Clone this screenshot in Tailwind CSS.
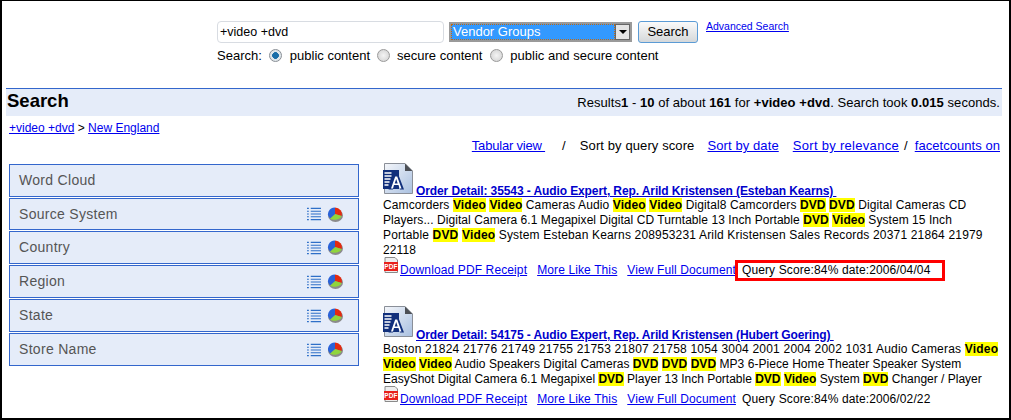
<!DOCTYPE html>
<html lang="en">
<head>
    <meta charset="UTF-8">
    <title>Search</title>
    <script src="https://cdn.jsdelivr.net/npm/@tailwindcss/browser@4"></script>
</head>
<body class="bg-white">
    <svg width="0" height="0" class="absolute">
        <defs>
            <linearGradient id="paper" x1="0" y1="0" x2="1" y2="1">
                <stop offset="0" stop-color="#f4f6fa"/>
                <stop offset="1" stop-color="#a9c0e0"/>
            </linearGradient>
            <symbol id="doc" viewBox="0 0 30 31">
                <path d="M1.500 .5H22L29.500 8V30.500H1.500Z" fill="url(#paper)" stroke="#8a8f98"/>
                <path d="M22 .5V8H29.500Z" fill="#4c4f55"/>
                <rect x="0" y="7" width="16" height="19" fill="#12307c"/>
                <path d="M1.500 10h7M1.500 13h7M1.500 16h6M1.500 19h5M1.500 22h4" stroke="#fff" stroke-width="1.300"/>
                <path d="M5.500 26.500L11 12h4.500l5.500 14.500h-4l-1-3h-5l-1 3Z" fill="#12307c"/>
                <path fill-rule="evenodd" d="M8 25.500L12.200 13.500h2L18.500 25.500h-2l-1-3.500h-4.500l-1 3.500ZM11.700 20.500h3L13.200 16Z" fill="#fff"/>
            </symbol>
            <symbol id="pdf" viewBox="0 0 14 16">
                <path d="M1 .5H11L13.500 3V15.500H1Z" fill="#eee" stroke="#8a8a8a"/>
                <rect x="0" y="5" width="14" height="9" fill="#e8211c"/>
                <text x="7" y="11.800" text-anchor="middle" font-family="Liberation Sans" font-size="6.500" font-weight="700" fill="#fff">PDF</text>
            </symbol>
            <symbol id="list" viewBox="0 0 15 14">
                <path d="M0 1h2M4 1h11M0 4h2M4 4h11M0 7h2M4 7h11M0 10h2M4 10h11M0 13h2M4 13h11" stroke="#2f6fc8" stroke-width="1.200"/>
            </symbol>
            <symbol id="pie" viewBox="0 0 16 15">
                <ellipse cx="8.500" cy="8.500" rx="7.500" ry="6.500" fill="#8b8b8b"/>
                <path d="M8 7V0.500A7 6.500 0 0 1 14.500 9Z" fill="#e32a10"/>
                <path d="M8 7L14.500 9A7 5 0 0 1 3 11.500Z" fill="#8fd53c"/>
                <path d="M8 7L3 11.500A7 6.500 0 0 1 8 .5Z" fill="#2a62d8"/>
            </symbol>
        </defs>
    </svg>

    <div class="h-[420px] overflow-hidden border-t border-l-2 border-r-2 border-b-2 border-black font-['Liberation_Sans',Arial,sans-serif] text-[12px] tracking-[.12px] leading-[15px] text-black">
        <!-- search form -->
        <div class="h-[87px] pl-[215px] pt-[20px] tracking-normal">
            <div class="flex items-start">
                <div class="w-[227px] h-[22px] border border-[#d8dce2] rounded-sm pl-[2px] text-[12.500px] leading-[20px]">+video +dvd</div>
                <div class="ml-[5px] mt-[1px] w-[183px] h-[20px] border-2 border-[#9a9a9a] flex">
                    <div class="flex-1 bg-[#3399ff] text-white text-[13px] leading-[16px] pl-[2px] outline-1 outline-dotted outline-[#c46a10] -outline-offset-1">Vendor Groups</div>
                    <div class="w-[15px] bg-[#e4e4e4] border border-[#666] flex items-center justify-center">
                        <div class="border-x-[4px] border-t-[4px] border-x-transparent border-t-black"></div>
                    </div>
                </div>
                <button class="ml-[6px] w-[60px] h-[22px] border border-[#5b9bd5] rounded-[3px] bg-gradient-to-b from-[#fafafa] to-[#d5d8da] text-[13px] leading-[18px]">Search</button>
                <a href="#" class="ml-[8px] -mt-[2px] text-[10.500px] leading-[14px] text-[#0000ee] underline">Advanced Search</a>
            </div>
            <div class="flex items-center mt-[3px] h-[18px] text-[13px]">
                <span>Search:</span>
                <span class="ml-[7px] w-[13px] h-[13px] rounded-full border border-[#8a8f96] bg-[radial-gradient(circle,#1a6ea8_40%,#dfe6ea_45%)]"></span>
                <span class="ml-[8px]">public content</span>
                <span class="ml-[7px] w-[13px] h-[13px] rounded-full border border-[#9a9a9a] bg-[radial-gradient(circle,#f4f4f4,#cfcfcf)]"></span>
                <span class="ml-[7px]">secure content</span>
                <span class="ml-[8px] w-[13px] h-[13px] rounded-full border border-[#9a9a9a] bg-[radial-gradient(circle,#f4f4f4,#cfcfcf)]"></span>
                <span class="ml-[7px]">public and secure content</span>
            </div>
        </div>

        <!-- title bar -->
        <div class="ml-[4px] mr-[7px] h-[28px] border-t border-[#3366cc] bg-[#e5ecf9] flex items-center justify-between pl-[1px] pr-[2px] tracking-normal">
            <h1 class="text-[18.500px] font-bold -mt-[4px]">Search</h1>
            <div class="text-[13px] tracking-[.05px]">Results<b>1</b> - <b>10</b> of about <b>161</b> for <b>+video +dvd</b>. Search took <b>0.015</b> seconds.</div>
        </div>
        <div class="pl-[7px] mt-[5px] tracking-normal"><a href="#" class="text-[#0000ee] underline">+video +dvd</a> &gt; <a href="#" class="text-[#0000ee] underline">New England</a></div>

        <div class="flex justify-end pr-[9px] h-[19px] items-center text-[13px] tracking-[.1px]">
            <a href="#" class="text-[#0000ee] underline whitespace-pre tracking-[-.2px]">Tabular view </a>
            <span class="ml-[17px]">/</span>
            <span class="ml-[14px]">Sort by query score</span>
            <a href="#" class="ml-[13px] text-[#0000ee] underline">Sort by date</a>
            <a href="#" class="ml-[14px] text-[#0000ee] underline tracking-[.3px]">Sort by relevance</a>
            <span class="ml-[5px]">/</span>
            <a href="#" class="ml-[7px] text-[#0000ee] underline tracking-[.05px]">facetcounts on</a>
        </div>

        <div class="flex">
            <!-- facets -->
            <div class="ml-[7px] mt-[9px] w-[350px] flex flex-col gap-[1px] text-[14px] text-[#555] tracking-[.3px]">
                <div class="h-[33px] border-[1.500px] border-[#3366cc] bg-[#e5ecf9] flex items-center pl-[9px]">Word Cloud</div>
                <div class="h-[32px] border-[1.500px] border-[#3366cc] bg-[#e5ecf9] flex items-center pl-[9px] pr-[15px]"><span class="flex-1">Source System</span><svg class="w-[14px] h-[14px] mr-[6px]"><use href="#list"/></svg><svg class="w-[16px] h-[15px]"><use href="#pie"/></svg></div>
                <div class="h-[33px] border-[1.500px] border-[#3366cc] bg-[#e5ecf9] flex items-center pl-[9px] pr-[15px]"><span class="flex-1">Country</span><svg class="w-[14px] h-[14px] mr-[6px]"><use href="#list"/></svg><svg class="w-[16px] h-[15px]"><use href="#pie"/></svg></div>
                <div class="h-[33px] border-[1.500px] border-[#3366cc] bg-[#e5ecf9] flex items-center pl-[9px] pr-[15px]"><span class="flex-1">Region</span><svg class="w-[14px] h-[14px] mr-[6px]"><use href="#list"/></svg><svg class="w-[16px] h-[15px]"><use href="#pie"/></svg></div>
                <div class="h-[33px] border-[1.500px] border-[#3366cc] bg-[#e5ecf9] flex items-center pl-[9px] pr-[15px]"><span class="flex-1">State</span><svg class="w-[14px] h-[14px] mr-[6px]"><use href="#list"/></svg><svg class="w-[16px] h-[15px]"><use href="#pie"/></svg></div>
                <div class="h-[33px] border-[1.500px] border-[#3366cc] bg-[#e5ecf9] flex items-center pl-[9px] pr-[15px]"><span class="flex-1">Store Name</span><svg class="w-[14px] h-[14px] mr-[6px]"><use href="#list"/></svg><svg class="w-[16px] h-[15px]"><use href="#pie"/></svg></div>
            </div>

            <!-- results -->
            <div class="ml-[24px] w-[620px] pt-[1px]">
                <div class="h-[145px]">
                    <div class="flex items-start h-[43px]">
                        <svg class="w-[30px] h-[31px] mr-[3px] mt-[7px] shrink-0"><use href="#doc"/></svg>
                        <a href="#" class="self-end whitespace-pre font-bold tracking-[-.1px] text-[#0000cc] underline">Order Detail: 35543 - Audio Expert, Rep. Arild Kristensen (Esteban Kearns) </a>
                    </div>
                    <p class="whitespace-nowrap -mt-[1px]"><span class="tracking-[.11px]">Camcorders <mark class="bg-[#ffff00] font-bold">Video</mark> <mark class="bg-[#ffff00] font-bold">Video</mark> Cameras Audio <mark class="bg-[#ffff00] font-bold">Video</mark> <mark class="bg-[#ffff00] font-bold">Video</mark> Digital8 Camcorders <mark class="bg-[#ffff00] font-bold">DVD</mark> <mark class="bg-[#ffff00] font-bold">DVD</mark> Digital Cameras CD</span><br><span class="tracking-[.06px]">Players... Digital Camera 6.1 Megapixel Digital CD Turntable 13 Inch Portable <mark class="bg-[#ffff00] font-bold">DVD</mark> <mark class="bg-[#ffff00] font-bold">Video</mark> System 15 Inch</span><br><span class="tracking-[.17px]">Portable <mark class="bg-[#ffff00] font-bold">DVD</mark> <mark class="bg-[#ffff00] font-bold">Video</mark> System Esteban Kearns 208953231 Arild Kristensen Sales Records 20371 21864 21979</span><br>22118</p>
                    <div class="flex items-end mt-[4px]">
                        <svg class="w-[14px] h-[16px] ml-[1px] mr-[1px] -mt-[5px] mb-[5px]"><use href="#pdf"/></svg>
                        <a href="#" class="ml-[1px] text-[#0000ee] underline">Download PDF Receipt</a>
                        <a href="#" class="ml-[10px] text-[#0000ee] underline">More Like This</a>
                        <a href="#" class="ml-[10px] text-[#0000ee] underline">View Full Document</a>
                        <span class="-ml-[1px] border-[3px] border-[#ff0000] pl-[4px] pr-[12px] -my-[3px]">Query Score:84% date:2006/04/04</span>
                    </div>
                </div>
                <div>
                    <div class="flex items-start h-[42px]">
                        <svg class="w-[30px] h-[31px] mr-[3px] mt-[5px] shrink-0"><use href="#doc"/></svg>
                        <a href="#" class="self-end whitespace-pre font-bold tracking-[-.1px] text-[#0000cc] underline">Order Detail: 54175 - Audio Expert, Rep. Arild Kristensen (Hubert Goering) </a>
                    </div>
                    <p class="whitespace-nowrap -mt-[1px]"><span class="tracking-[.2px]">Boston 21824 21776 21749 21755 21753 21807 21758 1054 3004 2001 2004 2002 1031 Audio Cameras <mark class="bg-[#ffff00] font-bold">Video</mark></span><br><span class="tracking-[.05px]"><mark class="bg-[#ffff00] font-bold">Video</mark> <mark class="bg-[#ffff00] font-bold">Video</mark> Audio Speakers Digital Cameras <mark class="bg-[#ffff00] font-bold">DVD</mark> <mark class="bg-[#ffff00] font-bold">DVD</mark> <mark class="bg-[#ffff00] font-bold">DVD</mark> MP3 6-Piece Home Theater Speaker System</span><br><span class="tracking-normal">EasyShot Digital Camera 6.1 Megapixel <mark class="bg-[#ffff00] font-bold">DVD</mark> Player 13 Inch Portable <mark class="bg-[#ffff00] font-bold">DVD</mark> <mark class="bg-[#ffff00] font-bold">Video</mark> System <mark class="bg-[#ffff00] font-bold">DVD</mark> Changer / Player</span></p>
                    <div class="flex items-end mt-[4px]">
                        <svg class="w-[14px] h-[16px] ml-[1px] mr-[1px] -mt-[5px] mb-[5px]"><use href="#pdf"/></svg>
                        <a href="#" class="ml-[1px] text-[#0000ee] underline">Download PDF Receipt</a>
                        <a href="#" class="ml-[10px] text-[#0000ee] underline">More Like This</a>
                        <a href="#" class="ml-[10px] text-[#0000ee] underline">View Full Document</a>
                        <span class="ml-[6px]">Query Score:84% date:2006/02/22</span>
                    </div>
                </div>
            </div>
        </div>
    </div>
</body>
</html>
